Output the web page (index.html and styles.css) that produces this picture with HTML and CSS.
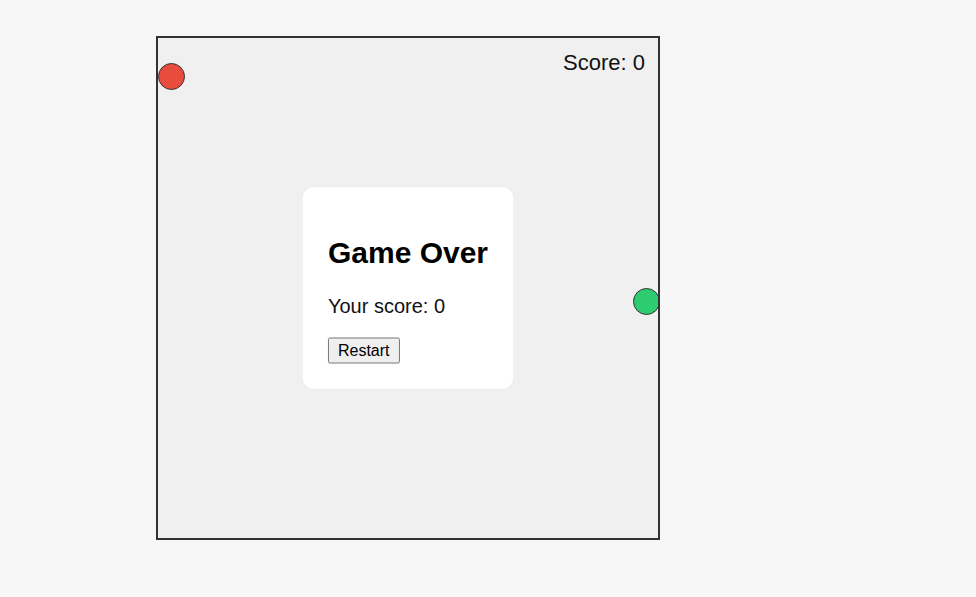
FILE: index.html
```html
<!DOCTYPE html>
<html lang="en">
<head>
<meta charset="utf-8">
<title>Game</title>
<link rel="stylesheet" href="styles.css">
</head>
<body>
  <div class="game">
    <div class="dot dot-red"></div>
    <div class="dot dot-green"></div>
    <div class="score">Score: 0</div>
    <div class="modal">
      <h2 class="modal-title">Game Over</h2>
      <p class="modal-text">Your score: 0</p>
      <button class="restart" type="button">Restart</button>
    </div>
  </div>
</body>
</html>
```
FILE: styles.css
```css
html, body {
  margin: 0;
  background: #f7f7f7;
}
body {
  padding: 36px 0 0 156px;
  font-family: "Liberation Sans", Arial, sans-serif;
  color: #111;
}
.game {
  position: relative;
  width: 500px;
  height: 500px;
  border: 2px solid #333;
  background: #f0f0f0;
  overflow: hidden;
}
.dot {
  position: absolute;
  width: 25px;
  height: 25px;
  border: 1px solid #333;
  border-radius: 50%;
}
.dot-red {
  left: 0;
  top: 25px;
  background: #e74c3c;
}
.dot-green {
  left: 475px;
  top: 250px;
  background: #2ecc71;
}
.score {
  position: absolute;
  top: 12px;
  right: 13px;
  font-size: 22px;
  color: #111;
}
.modal {
  position: absolute;
  left: 50%;
  top: 50%;
  transform: translate(-50%, -50%);
  background: #fff;
  border-radius: 10px;
  padding: 25px;
}
.modal-title {
  margin: 23px 0 25px;
  font-size: 30px;
  font-weight: bold;
  color: #000;
  white-space: nowrap;
}
.modal-text {
  margin: 20px 0;
  font-size: 20px;
  color: #111;
}
.restart {
  display: block;
  font-family: "Liberation Sans", Arial, sans-serif;
  font-size: 16px;
  padding: 3px 9px;
  background: #efefef;
  border: 1px solid #767676;
  border-radius: 2px;
  color: #000;
  margin: 0;
}
```
